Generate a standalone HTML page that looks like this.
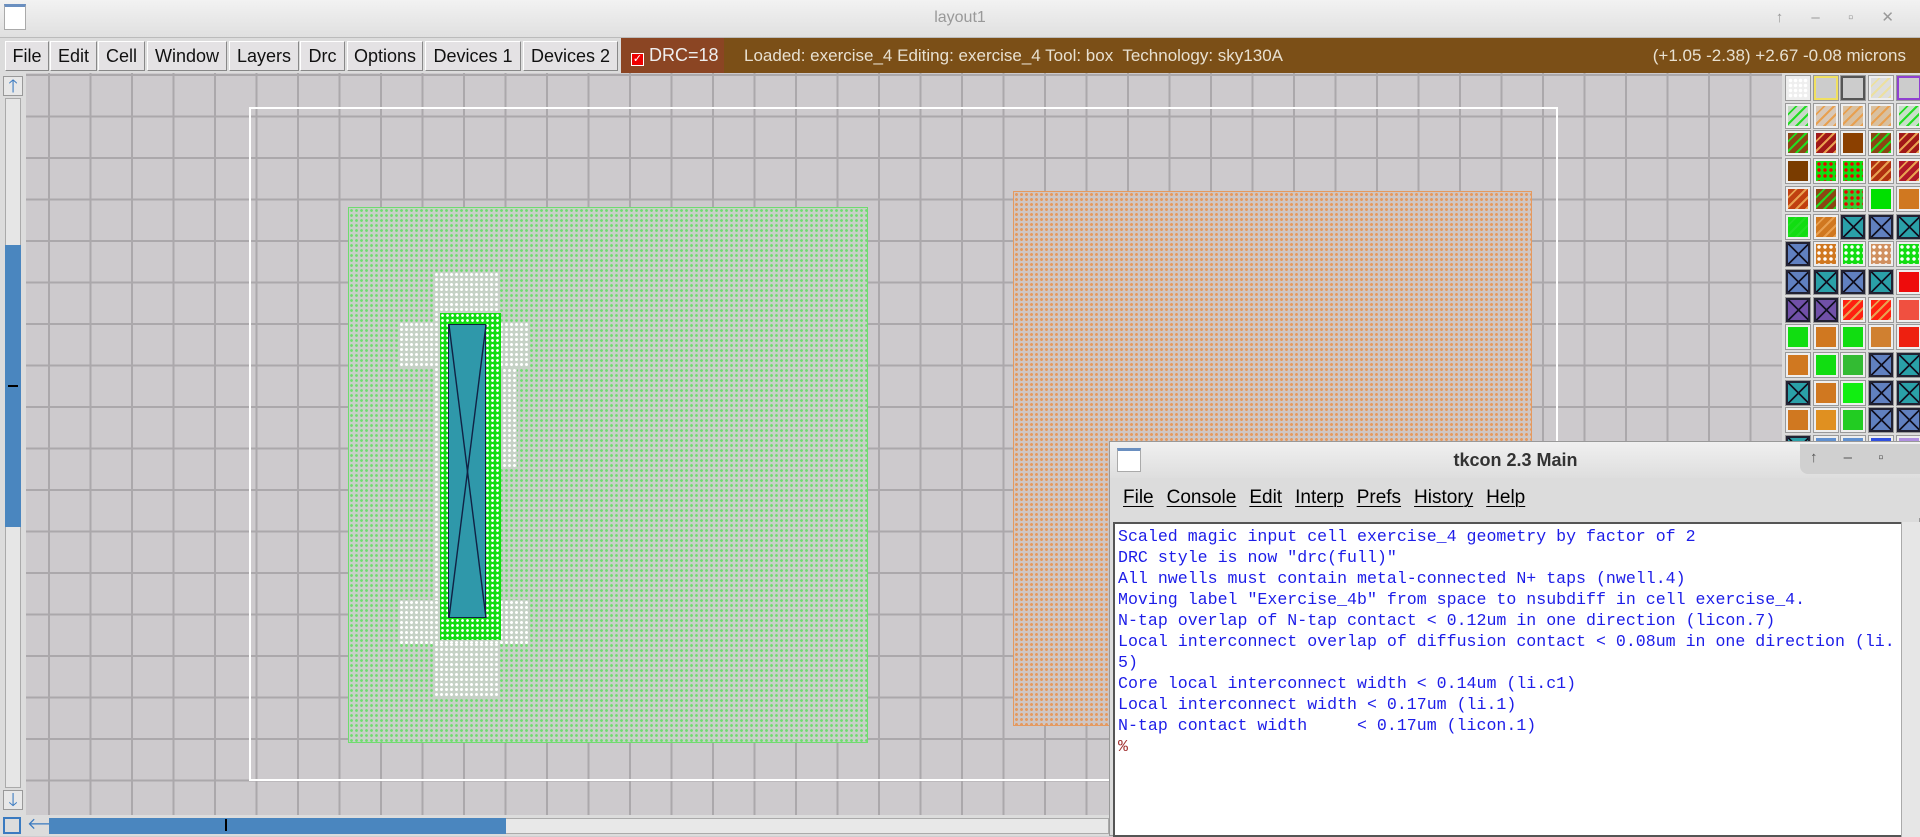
<!DOCTYPE html>
<html><head><meta charset="utf-8"><style>
*{margin:0;padding:0;box-sizing:border-box}
body{width:1920px;height:836px;overflow:hidden;background:#d0cdd0;font-family:"Liberation Sans Narrow","Liberation Sans",sans-serif;position:relative}
.abs{position:absolute}
#title{left:0;top:0;width:1920px;height:38px;background:linear-gradient(#f2f2f2,#e0e0e0);border-bottom:1px solid #bbb}
#title .t{left:0;width:1920px;top:9px;text-align:center;font-size:16px;color:#999}
#menu{left:0;top:38px;width:1920px;height:35px;background:#dcdcdc}
.btn{position:absolute;top:3px;height:30px;background:#e4e2e4;border:1px solid #fff;border-right-color:#888;border-bottom-color:#888;font-size:18px;text-align:center;line-height:28px;color:#111}
#drc{left:621px;top:38px;width:103px;height:35px;background:#8b4523;color:#eee;font-size:18px;line-height:35px;padding-left:10px}
#status{left:724px;top:38px;width:1196px;height:35px;background:#7b4f17;color:#e8e0d0;font-size:17px;line-height:35px;font-family:"Liberation Sans",sans-serif}
#canvas{left:26px;top:73px;width:1756px;height:742px;background-color:#cdcacd;
background-image:linear-gradient(90deg,#aba8ab 2px,transparent 2px),linear-gradient(#aba8ab 2px,transparent 2px);
background-size:41.5px 41.5px;background-position:22px 1px}
.gdot{background-color:#c8d0c8;background-image:radial-gradient(circle,#6fdc6f 1.2px,transparent 1.6px);background-size:5px 5px}
.odot{background-color:#cfc6c4;background-image:radial-gradient(circle,#e59a60 1.3px,transparent 1.7px);background-size:5px 5px}
.wdot{background-color:#c6d2c6;background-image:radial-gradient(circle,#fff 1.3px,transparent 1.7px);background-size:5px 5px}
.pal{position:absolute;width:24px;height:24px;border:2px solid #eee;outline:1px solid #999}
#tk{left:1109px;top:441px;width:811px;height:395px;background:#dcdcdc;border:1px solid #999}
#tkt{left:0;top:0;width:811px;height:36px;background:linear-gradient(#f0f0f0,#dedede)}
#tkm{left:0;top:36px;width:811px;height:40px;background:#dcdcdc;font-size:19px;font-family:"Liberation Sans Narrow","Liberation Sans",sans-serif}
#tkm span{margin-left:13px;text-decoration:underline;text-decoration-thickness:1px;text-underline-offset:3px;line-height:40px}
#txt{left:3px;top:80px;width:788px;height:315px;background:#fff;border:2px solid #555;border-right:none;font-family:"Liberation Mono",monospace;font-size:16.6px;color:#1d1de8;line-height:21px;padding:2px 0 0 3px;white-space:pre;overflow:hidden}
</style></head><body>
<div id="title" class="abs"><div class="abs" style="left:4px;top:4px;width:22px;height:26px;background:#fff;border:1px solid #aaa;border-top:3px solid #6a8fc0"></div><div class="t abs">layout1</div>
<div class="abs" style="right:14px;top:8px;font-size:15px;color:#999;letter-spacing:12px">↑ ‒ ▫ ✕</div></div>
<div id="menu" class="abs">
<div class="btn" style="left:5px;width:44px">File</div>
<div class="btn" style="left:50px;width:47px">Edit</div>
<div class="btn" style="left:98px;width:47px">Cell</div>
<div class="btn" style="left:147px;width:80px">Window</div>
<div class="btn" style="left:229px;width:70px">Layers</div>
<div class="btn" style="left:300px;width:45px">Drc</div>
<div class="btn" style="left:347px;width:76px">Options</div>
<div class="btn" style="left:425px;width:96px">Devices 1</div>
<div class="btn" style="left:523px;width:95px">Devices 2</div>
</div>
<div id="drc" class="abs"><span style="display:inline-block;width:13px;height:13px;background:#e00;border:1px solid #fff;color:#fff;font-size:11px;line-height:11px;text-align:center;vertical-align:-1px">✓</span> DRC=18</div>
<div id="status" class="abs"><span style="margin-left:20px">Loaded: exercise_4 Editing: exercise_4 Tool: box&nbsp; Technology: sky130A</span><span style="position:absolute;right:14px">(+1.05 -2.38) +2.67 -0.08 microns</span></div>
<div id="canvas" class="abs"></div>
<!-- left scrollbar -->
<div class="abs" style="left:0;top:73px;width:26px;height:742px;background:#dcdcdc"></div>
<div class="abs" style="left:3px;top:76px;width:20px;height:20px;background:#e8e8e8;border:1px solid #999;color:#3a7ac0;font-size:18px;line-height:18px;text-align:center">🡑</div>
<div class="abs" style="left:5px;top:98px;width:16px;height:690px;background:#e6e6e6;border:1px solid #aaa"></div>
<div class="abs" style="left:5px;top:245px;width:16px;height:282px;background:#4a86bf"></div>
<div class="abs" style="left:8px;top:385px;width:10px;height:2px;background:#000"></div>
<div class="abs" style="left:3px;top:790px;width:20px;height:20px;background:#e8e8e8;border:1px solid #999;color:#3a7ac0;font-size:18px;line-height:18px;text-align:center">🡓</div>
<!-- bottom scrollbar -->
<div class="abs" style="left:0;top:815px;width:1109px;height:21px;background:#dcdcdc"></div>
<div class="abs" style="left:3px;top:817px;width:18px;height:17px;border:2px solid #3a7ac0"></div>
<div class="abs" style="left:27px;top:817px;width:20px;height:17px;color:#3a7ac0;font-size:16px;line-height:16px">🡐</div>
<div class="abs" style="left:49px;top:818px;width:1060px;height:16px;background:#e8e8e8;border:1px solid #aaa"></div>
<div class="abs" style="left:49px;top:818px;width:457px;height:16px;background:#4a86bf"></div>
<div class="abs" style="left:225px;top:819px;width:2px;height:12px;background:#000"></div>
<!-- layout shapes -->
<div class="abs" style="left:249px;top:107px;width:1309px;height:674px;border:2px solid #fff"></div>
<div class="abs gdot" style="left:348px;top:207px;width:520px;height:536px;border:1px solid #6fdc6f"></div>
<div class="abs odot" style="left:1013px;top:191px;width:519px;height:535px;border:1px solid #e59a60"></div>
<div class="abs wdot" style="left:434px;top:272px;width:64px;height:426px"></div>
<div class="abs wdot" style="left:399px;top:322px;width:130px;height:46px"></div>
<div class="abs wdot" style="left:399px;top:600px;width:130px;height:44px"></div>
<div class="abs wdot" style="left:497px;top:368px;width:20px;height:100px"></div>
<div class="abs" style="left:440px;top:313px;width:61px;height:327px;background:#11dd11;background-image:radial-gradient(circle,#fff 1.2px,transparent 1.6px);background-size:5px 5px"></div>
<div class="abs" style="left:448px;top:324px;width:38px;height:294px;background:#2f98aa;border:1px solid #124"></div>
<svg class="abs" style="left:448px;top:324px" width="39" height="295"><line x1="1" y1="1" x2="38" y2="294" stroke="#124" stroke-width="1.4"/><line x1="38" y1="1" x2="1" y2="294" stroke="#124" stroke-width="1.4"/></svg>
<!-- palette -->
<div class="abs" style="left:1782px;top:73px;width:138px;height:368px;background:#dcdcdc"></div>
<div id="pal"></div>
<!-- tkcon -->
<div id="tk" class="abs">
<div id="tkt" class="abs"><div class="abs" style="left:7px;top:6px;width:24px;height:24px;background:#fff;border:1px solid #aaa;border-top:3px solid #6a8fc0"></div>
<div class="abs" style="left:0;width:811px;top:8px;text-align:center;font-size:18px;color:#333;font-weight:bold;font-family:'Liberation Sans Narrow','Liberation Sans',sans-serif">tkcon 2.3 Main</div>
<div class="abs" style="left:690px;top:2px;width:120px;height:30px;background:#d0d0d0;border-radius:0 0 0 8px;font-size:15px;color:#555;line-height:28px;letter-spacing:11px;padding-left:10px">↑ ‒ ▫ ✕</div></div>
<div id="tkm" class="abs"><span>File</span><span>Console</span><span>Edit</span><span>Interp</span><span>Prefs</span><span>History</span><span>Help</span></div>
<div id="txt" class="abs">Scaled magic input cell exercise_4 geometry by factor of 2
DRC style is now "drc(full)"
All nwells must contain metal-connected N+ taps (nwell.4)
Moving label "Exercise_4b" from space to nsubdiff in cell exercise_4.
N-tap overlap of N-tap contact &lt; 0.12um in one direction (licon.7)
Local interconnect overlap of diffusion contact &lt; 0.08um in one direction (li.
5)
Core local interconnect width &lt; 0.14um (li.c1)
Local interconnect width &lt; 0.17um (li.1)
N-tap contact width     &lt; 0.17um (licon.1)
<span style="color:#a03030">%</span></div>
<div class="abs" style="left:791px;top:80px;width:20px;height:315px;background:#e6e6e6;border-left:1px solid #aaa"></div>
</div>
<script>
var rows=[
["#eee:d","#ccc:y","#ccc:k","#ddd:l","#ccc:p"],
["#c8d8c8:g","#d8c8b8:o","#d8c0a0:o","#d8c0a0:o","#c8e0c8:g"],
["#8b4513:g","#a01818:o","#8b4000","#8b4513:g","#a01818:o"],
["#7a3c00","#11dd11:r","#11dd11:r","#b03010:o","#b01828:o"],
["#c04010:o","#8b4513:g","#33cc33:r","#00e000","#d07820"],
["#11dd11:g","#d07820:o","#2aa0a8:x","#6080c0:x","#2aa0a8:x"],
["#6080c0:x","#d07820:w","#11dd11:w","#d09060:w","#11dd11:w"],
["#6080c0:x","#2aa0a8:x","#6080c0:x","#2aa0a8:x","#ee0c0c"],
["#7050a8:x","#7050a8:x","#ff2010:o","#ff2010:o","#f05040"],
["#11dd11","#d07820","#11dd11","#d08030","#ee2010"],
["#d07820","#11dd11","#33bb33","#6080c0:x","#2aa0a8:x"],
["#2aa0a8:x","#d07820","#11ee11","#6080c0:x","#2aa0a8:x"],
["#d07820","#e09020","#22cc22","#6080c0:x","#6080c0:x"],
["#2aa0a8:x","#6090d0","#6090d0","#3050e0","#b090e0"]];
var h="";
rows.forEach(function(r,i){r.forEach(function(c,j){var p=c.split(":"),col=p[0],t=p[1],x=1786+j*27.7,y=76+i*27.7;
var st="left:"+x+"px;top:"+y+"px;background-color:"+col+";";
if(t=="d")st+="background-image:radial-gradient(circle,#fff 1.5px,transparent 2px);background-size:5px 5px;";
if(t=="y")st+="border-color:#f0e060;";if(t=="k")st+="border-color:#555;";if(t=="p")st+="border-color:#9040d0;";
if(t=="g"||t=="o"||t=="l"||t=="r"||t=="w"){var lc=t=="g"?"#22dd22":t=="o"?"#e8a050":t=="l"?"#ece0a0":t=="r"?"#e00":"#fff";
st+= (t=="r"||t=="w")?"background-image:radial-gradient(circle,"+lc+" 1.5px,transparent 2px);background-size:6px 6px;":"background-image:repeating-linear-gradient(135deg,transparent 0 5px,"+lc+" 5px 7px);";}
if(t=="x")st+="border-color:#223;background-image:linear-gradient(45deg,transparent 48%,#112 48% 54%,transparent 54%),linear-gradient(135deg,transparent 48%,#112 48% 54%,transparent 54%);";
if(y<441||x<1109)h+='<div class="pal" style="'+st+'"></div>';});});
document.getElementById("pal").innerHTML=h;
</script>
</body></html>
